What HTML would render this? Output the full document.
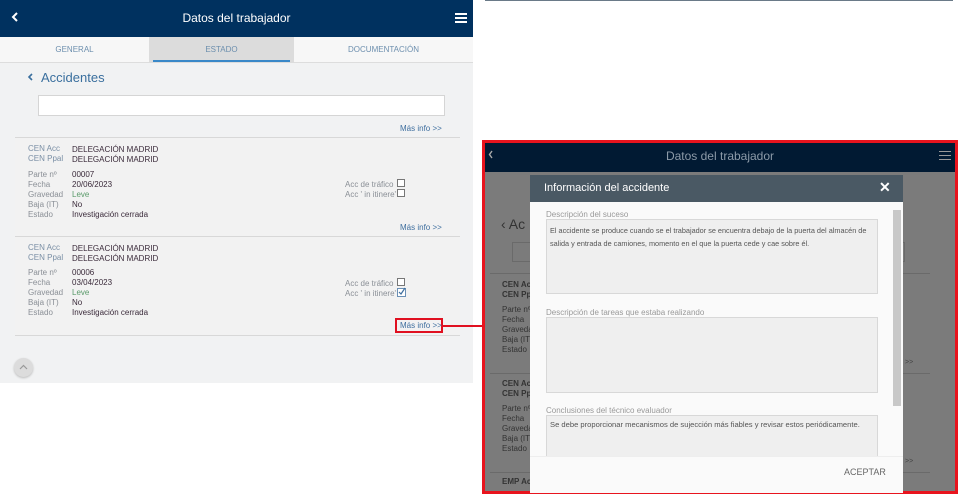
<!DOCTYPE html>
<html><head><meta charset="utf-8"><style>
*{margin:0;padding:0;box-sizing:border-box}
body{width:960px;height:498px;background:#fff;position:relative;overflow:hidden;font-family:"Liberation Sans",sans-serif}
.a{position:absolute}
.lbl{color:#8a8f96;font-size:8px}
.val{color:#3a2a3a;font-size:8px}
.cb{position:absolute;width:8px;height:8px;border:1px solid #777;background:#fff}
.link{color:#3f6f9f;font-size:8px}
</style></head><body>
<div class="a" style="left:0;top:0;width:473px;height:383px;background:#f1f2f3"></div>
<div class="a" style="left:0;top:0;width:473px;height:37px;background:#00315f"></div>
<svg class="a" style="left:11px;top:12px" width="8" height="10"><path d="M6 1L2 5L6 9" stroke="#fff" stroke-width="2" fill="none"/></svg>
<div class="a" style="left:0;top:11px;width:473px;text-align:center;color:#fff;font-size:12px">Datos del trabajador</div>
<div class="a" style="left:455px;top:13px;width:12px;height:2px;background:#fff;box-shadow:0 4px 0 #fff,0 8px 0 #fff"></div>
<div class="a" style="left:0;top:37px;width:473px;height:26px;background:#f7f7f7;border-bottom:1px solid #ddd"></div>
<div class="a" style="left:149px;top:37px;width:145px;height:26px;background:#dcdcdc"></div>
<div class="a" style="left:153px;top:60px;width:137px;height:2px;background:#3a88c8"></div>
<div class="a" style="left:0;top:45px;width:149px;text-align:center;color:#6d8fae;font-size:8px">GENERAL</div>
<div class="a" style="left:149px;top:45px;width:145px;text-align:center;color:#6d8fae;font-size:8px">ESTADO</div>
<div class="a" style="left:294px;top:45px;width:179px;text-align:center;color:#6d8fae;font-size:8px">DOCUMENTACIÓN</div>
<svg class="a" style="left:27px;top:73px" width="7" height="9"><path d="M5 1L2 4L5 7" stroke="#3a6f9e" stroke-width="1.6" fill="none"/></svg>
<div class="a" style="left:41px;top:70px;color:#3a6f9e;font-size:13px">Accidentes</div>
<div class="a" style="left:38px;top:95px;width:407px;height:21px;background:#fff;border:1px solid #d5d5d5"></div>
<div class="a link" style="left:400px;top:124px">Más info &gt;&gt;</div>
<div class="a" style="left:15px;top:137px;width:445px;height:1px;background:#d8d8d8"></div>
<div class="a" style="left:15px;top:138px;width:445px;height:98px;background:#f2f2f2"></div>
<div class="a" style="left:15px;top:236px;width:445px;height:1px;background:#d8d8d8"></div>
<div class="a" style="left:15px;top:237px;width:445px;height:98px;background:#f2f2f2"></div>
<div class="a" style="left:15px;top:335px;width:445px;height:1px;background:#d8d8d8"></div>

<div class="a lbl" style="left:28px;top:144px;line-height:10px;color:#7a8fa5">CEN Acc<br>CEN Ppal</div>
<div class="a val" style="left:72px;top:145px;line-height:10px">DELEGACIÓN MADRID<br>DELEGACIÓN MADRID</div>
<div class="a lbl" style="left:28px;top:170px;line-height:10px">Parte nº<br>Fecha<br>Gravedad<br>Baja (IT)<br>Estado</div>
<div class="a val" style="left:72px;top:170px;line-height:10px">00007<br>20/06/2023<br><span style="color:#5a9a6a">Leve</span><br>No<br>Investigación cerrada</div>
<div class="a lbl" style="left:345px;top:180px;line-height:10px">Acc de tráfico<br>Acc ' in itinere'</div>
<div class="cb" style="left:397px;top:179px"></div><div class="cb" style="left:397px;top:189px"></div>
<div class="a link" style="left:400px;top:223px">Más info &gt;&gt;</div>

<div class="a lbl" style="left:28px;top:243px;line-height:10px;color:#7a8fa5">CEN Acc<br>CEN Ppal</div>
<div class="a val" style="left:72px;top:244px;line-height:10px">DELEGACIÓN MADRID<br>DELEGACIÓN MADRID</div>
<div class="a lbl" style="left:28px;top:268px;line-height:10px">Parte nº<br>Fecha<br>Gravedad<br>Baja (IT)<br>Estado</div>
<div class="a val" style="left:72px;top:268px;line-height:10px">00006<br>03/04/2023<br><span style="color:#5a9a6a">Leve</span><br>No<br>Investigación cerrada</div>
<div class="a lbl" style="left:345px;top:279px;line-height:10px">Acc de tráfico<br>Acc ' in itinere'</div>
<div class="cb" style="left:397px;top:278px"></div>
<svg class="a" style="left:397px;top:286px" width="10" height="11"><rect x="0.5" y="2.5" width="8" height="8" fill="#fff" stroke="#6a8fb5"/><path d="M2 6L4 8L8 2" stroke="#3f6f9f" stroke-width="1.2" fill="none"/></svg>
<div class="a" style="left:395px;top:318px;width:48px;height:15px;border:2px solid #e01020"></div>
<div class="a link" style="left:400px;top:321px">Más info &gt;&gt;</div>
<div class="a" style="left:443px;top:325px;width:41px;height:2px;background:#e01020"></div>
<div class="a" style="left:14px;top:358px;width:19px;height:19px;border-radius:50%;background:#dcdcdc;box-shadow:0 1px 2px #bbb"></div>
<svg class="a" style="left:19px;top:364px" width="9" height="6"><path d="M1 5L4.5 1.5L8 5" stroke="#999" stroke-width="1.2" fill="none"/></svg>

<div class="a" style="left:485px;top:0;width:468px;height:1px;background:#6a7a88"></div>
<div class="a" style="left:482px;top:140px;width:476px;height:354px;border:3px solid #e8141e;background:#7b7b7b"></div>
<div class="a" style="left:485px;top:143px;width:470px;height:29px;background:#011a33"></div>
<svg class="a" style="left:488px;top:150px" width="6" height="9"><path d="M4 1L1.5 4.5L4 8" stroke="#aaa" stroke-width="1.4" fill="none"/></svg>
<div class="a" style="left:485px;top:149px;width:470px;text-align:center;color:#8c9aa8;font-size:12px">Datos del trabajador</div>
<div class="a" style="left:939px;top:151px;width:12px;height:1px;background:#999;box-shadow:0 4px 0 #999,0 8px 0 #999"></div>
<div class="a" style="left:501px;top:216px;color:#333;font-size:14px">&lsaquo; Ac</div>
<div class="a" style="left:512px;top:242px;width:20px;height:20px;border:1px solid #6a6a6a"></div>
<div class="a" style="left:885px;top:242px;width:20px;height:20px;border:1px solid #6a6a6a"></div>
<div class="a" style="left:490px;top:273px;width:440px;height:1px;background:#6a6a6a"></div>
<div class="a" style="left:490px;top:373px;width:440px;height:1px;background:#6a6a6a"></div>
<div class="a" style="left:490px;top:472px;width:440px;height:1px;background:#6a6a6a"></div>
<div class="a" style="left:502px;top:280px;font-size:8px;line-height:10px;color:#333;font-weight:bold">CEN Acc<br>CEN Ppa</div>
<div class="a" style="left:502px;top:305px;font-size:8px;line-height:10px;color:#333">Parte nº<br>Fecha<br>Graveda<br>Baja (IT)<br>Estado</div>
<div class="a" style="left:502px;top:379px;font-size:8px;line-height:10px;color:#333;font-weight:bold">CEN Acc<br>CEN Ppa</div>
<div class="a" style="left:502px;top:404px;font-size:8px;line-height:10px;color:#333">Parte nº<br>Fecha<br>Graveda<br>Baja (IT)<br>Estado</div>
<div class="a" style="left:502px;top:477px;font-size:8px;line-height:10px;color:#333;font-weight:bold">EMP Acc</div>
<div class="a" style="left:905px;top:359px;font-size:7px;color:#444">&gt;&gt;</div>
<div class="a" style="left:905px;top:458px;font-size:7px;color:#444">&gt;&gt;</div>

<div class="a" style="left:530px;top:175px;width:373px;height:27px;background:#4a5964"></div>
<div class="a" style="left:544px;top:182px;color:#fff;font-size:11px">Información del accidente</div>
<div class="a" style="left:879px;top:179px;color:#fff;font-size:14px;font-weight:bold">✕</div>
<div class="a" style="left:530px;top:202px;width:373px;height:291px;background:#fafafa"></div>
<div class="a" style="left:893px;top:210px;width:8px;height:196px;background:#c8c8c8"></div>
<div class="a" style="left:546px;top:210px;color:#999;font-size:8px">Descripción del suceso</div>
<div class="a" style="left:546px;top:219px;width:332px;height:75px;background:#efefef;border:1px solid #d8d8d8;padding:4px 3px;font-size:7.3px;line-height:13px;color:#555">El accidente se produce cuando se el trabajador se encuentra debajo de la puerta del almacén de salida y entrada de camiones, momento en el que la puerta cede y cae sobre él.</div>
<div class="a" style="left:546px;top:308px;color:#999;font-size:8px">Descripción de tareas que estaba realizando</div>
<div class="a" style="left:546px;top:317px;width:332px;height:76px;background:#efefef;border:1px solid #d8d8d8"></div>
<div class="a" style="left:546px;top:406px;color:#999;font-size:8px">Conclusiones del técnico evaluador</div>
<div class="a" style="left:546px;top:415px;width:332px;height:42px;background:#efefef;border:1px solid #d8d8d8;padding:4px 3px;font-size:7.6px;color:#555">Se debe proporcionar mecanismos de sujección más fiables y revisar estos periódicamente.</div>
<div class="a" style="left:530px;top:456px;width:373px;height:37px;background:#fafafa;border-top:1px solid #eee"></div>
<div class="a" style="left:844px;top:467px;color:#666;font-size:9px">ACEPTAR</div>
</body></html>
